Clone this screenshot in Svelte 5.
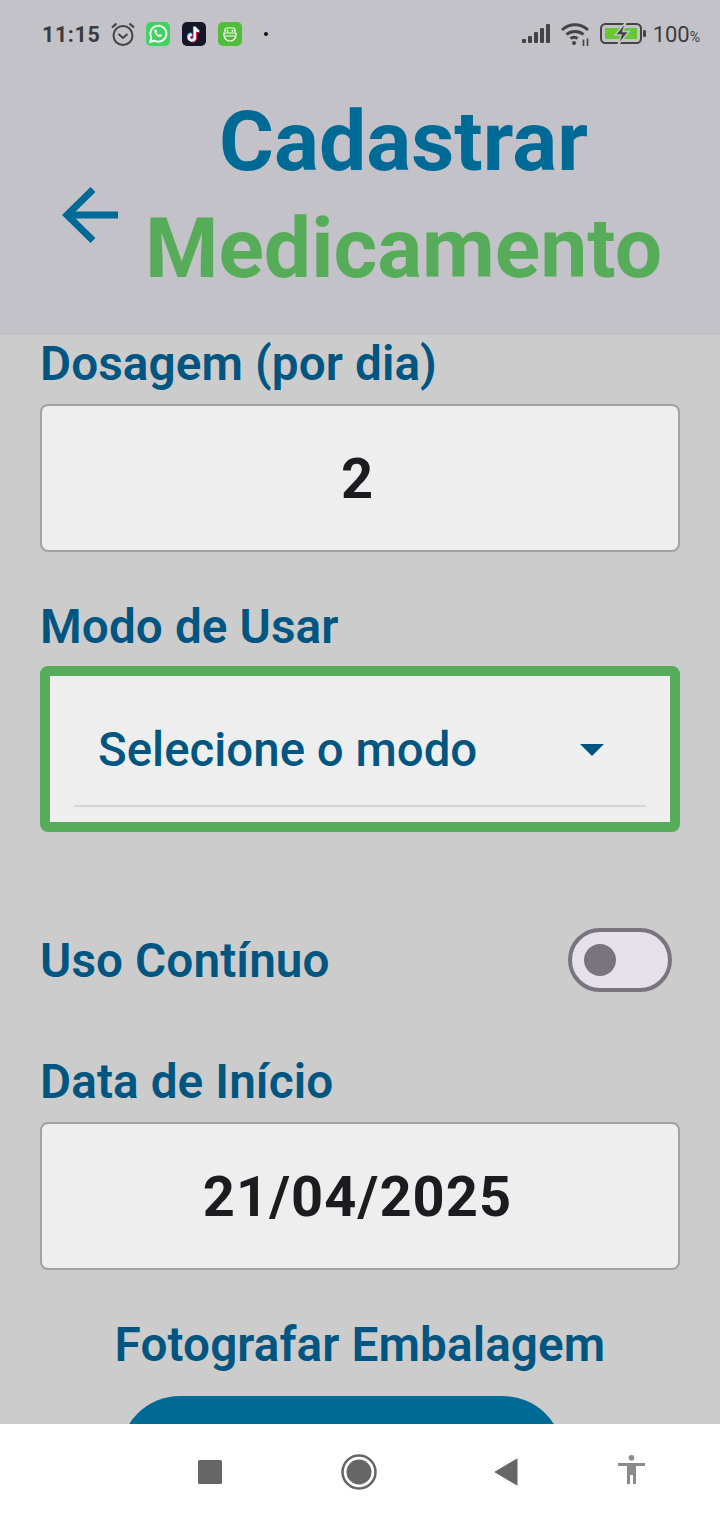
<script>
  let continuous = $state(false);
  const dosage = '2';
  const startDate = '21/04/2025';
</script>

<div class="screen">
  <header class="top">
    <div class="statusbar">
      <div class="status-left">
        <span class="time">11:15</span>
        <svg class="alarm" width="24" height="24" viewBox="0 0 24 24" fill="none" stroke="#444" stroke-width="2">
          <circle cx="12" cy="13.500" r="9.500"/>
          <path d="M7.500 12l4.500 4 4.500-4"/>
          <path d="M1 5.500l4.500-4M23 5.500l-4.500-4" stroke-width="2.200"/>
        </svg>
        <svg class="app" width="24" height="24" viewBox="0 0 24 24">
          <rect width="24" height="24" rx="5" fill="#3fd45f"/>
          <path d="M4.200 20l1.200-4.400a8 8 0 1 1 3 3z" fill="none" stroke="#fff" stroke-width="1.800"/>
          <path d="M9 7.500c-1 .8-1 2.400.4 4.400 1.400 2 3.200 3.200 4.800 3 1-.2 1.600-1 1.600-1.800l-2-1-.9.9c-1-.4-2-1.500-2.500-2.600l.8-.9-.9-2z" fill="#fff"/>
        </svg>
        <svg class="app" width="24" height="24" viewBox="0 0 24 24">
          <rect width="24" height="24" rx="5" fill="#14162a"/>
          <path d="M13 5v10.500a3 3 0 1 1-3-3M13 5c.3 2.300 1.800 3.800 4 4" fill="none" stroke="#f5235a" stroke-width="2.600" transform="translate(.8 .6)"/>
          <path d="M13 5v10.500a3 3 0 1 1-3-3M13 5c.3 2.300 1.800 3.800 4 4" fill="none" stroke="#35e5ea" stroke-width="2.600" transform="translate(-.8 -.6)"/>
          <path d="M13 5v10.500a3 3 0 1 1-3-3M13 5c.3 2.300 1.800 3.800 4 4" fill="none" stroke="#fff" stroke-width="2"/>
        </svg>
        <svg class="app" width="24" height="24" viewBox="0 0 24 24">
          <rect width="24" height="24" rx="5" fill="#52bd3a"/>
          <path d="M7 10V8a2 2 0 0 1 2-2h6a2 2 0 0 1 2 2v2M6 11h12v2a6 6 0 0 1-12 0z" fill="none" stroke="#fff" stroke-width="1.200"/>
          <circle cx="9.500" cy="8.800" r="1" fill="#fff"/>
          <circle cx="14.500" cy="8.800" r="1" fill="#fff"/>
          <path d="M7 14h10" fill="none" stroke="#fff" stroke-width="1"/>
        </svg>
        <span class="dot"></span>
      </div>
      <div class="status-right">
        <svg width="28" height="20" viewBox="0 0 28 20" fill="#444">
          <rect x="0" y="15" width="4" height="4" rx="1"/>
          <rect x="6" y="12" width="4" height="7" rx="1"/>
          <rect x="12" y="8" width="4" height="11" rx="1"/>
          <rect x="18" y="4" width="4" height="15" rx="1"/>
          <rect x="24" y="0" width="4" height="19" rx="1"/>
        </svg>
        <svg width="28" height="23" viewBox="0 0 28 23" fill="none" stroke="#444" stroke-width="3">
          <path d="M1 7c7-7 19-7 26 0"/>
          <path d="M5.500 11.500c4.500-4 12.500-4 17 0"/>
          <path d="M9.500 15.500c2-1.500 5-1.500 7 0"/>
          <circle cx="13" cy="20" r="2" fill="#444" stroke="none"/>
          <path d="M22.500 16.500V23M26.500 15.500V23" stroke-width="1.600"/>
        </svg>
        <svg width="46" height="24" viewBox="0 0 46 24">
          <rect x="1" y="2" width="40" height="19" rx="4.500" fill="none" stroke="#444" stroke-width="2"/>
          <rect x="5" y="6" width="32" height="11" rx="1" fill="#66c832"/>
          <path d="M26 0L15 13h6l-3 10 11-13.500h-6z" fill="#444" stroke="#c3c2c8" stroke-width="1.500"/>
          <rect x="43" y="8" width="3" height="7" rx="1.200" fill="#444"/>
        </svg>
        <span class="pct">100<small>%</small></span>
      </div>
    </div>

    <div class="titlebar">
      <button class="back" aria-label="Voltar">
        <svg width="56" height="56" viewBox="0 0 56 56" fill="none" stroke="#006a97" stroke-width="7">
          <path d="M56 28H5"/>
          <path d="M31 2.500L5 28l26 25.500"/>
        </svg>
      </button>
      <h1><span class="blue">Cadastrar</span> <span class="green">Medicamento</span></h1>
    </div>
  </header>

  <main class="form">
    <label class="label" for="dose">Dosagem (por dia)</label>
    <div class="field" id="dose">{dosage}</div>

    <div class="label mode-label">Modo de Usar</div>
    <div class="select-box">
      <div class="select">
        <span>Selecione o modo</span>
        <span class="caret"></span>
      </div>
    </div>

    <div class="switch-row">
      <span class="label row-label">Uso Contínuo</span>
      <button class="switch" class:on={continuous} aria-label="Uso Contínuo" onclick={() => (continuous = !continuous)}>
        <span class="knob"></span>
      </button>
    </div>

    <div class="label date-label">Data de Início</div>
    <div class="field">{startDate}</div>

    <div class="label photo-label">Fotografar Embalagem</div>
    <button class="photo-btn" aria-label="Fotografar Embalagem"></button>
  </main>

  <nav class="navbar">
    <svg width="24" height="24" viewBox="0 0 24 24"><rect width="24" height="24" rx="1.500" fill="#666"/></svg>
    <svg width="36" height="36" viewBox="0 0 36 36">
      <circle cx="18" cy="18" r="16.500" fill="none" stroke="#666" stroke-width="2.500"/>
      <circle cx="18" cy="18" r="12.500" fill="#666"/>
    </svg>
    <svg width="24" height="28" viewBox="0 0 24 28"><path d="M23 1v26L1 14z" fill="#666" stroke="#666" stroke-linejoin="round"/></svg>
    <svg class="a11y" width="27" height="29" viewBox="0 0 27 29" fill="#8a8a8a">
      <circle cx="13.500" cy="2.800" r="2.800"/>
      <path d="M0 8h27v3h-9v18h-3V20h-3v9H9V11H0z"/>
    </svg>
  </nav>
</div>

<style>
  :global(body) {
    margin: 0;
    font-family: Roboto, "Liberation Sans", sans-serif;
  }
  .screen {
    display: flex;
    flex-direction: column;
    width: 720px;
    height: 1520px;
    overflow: hidden;
    background: #cccccc;
  }
  .top {
    flex: 0 0 335px;
    background: #c3c2c8;
  }
  .statusbar {
    display: flex;
    justify-content: space-between;
    align-items: center;
    height: 68px;
    padding: 0 20px 0 42px;
    color: #444;
  }
  .status-left,
  .status-right {
    display: flex;
    align-items: center;
  }
  .time {
    width: 57px;
    font-size: 21.500px;
    font-weight: 700;
    letter-spacing: 0.6px;
    color: #3c3c3c;
    white-space: nowrap;
  }
  .alarm { margin-left: 12px; }
  .app { margin-left: 12px; }
  .alarm + .app { margin-left: 11px; }
  .dot {
    width: 4px;
    height: 4px;
    border-radius: 50%;
    background: #111;
    margin-left: 22px;
  }
  .status-right { gap: 11px; }
  .pct {
    margin-left: -4px;
    font-size: 22px;
    color: #3c3c3c;
  }
  .pct small { font-size: 14px; }
  .titlebar {
    display: flex;
    align-items: center;
    padding: 20px 0 0 62px;
  }
  .back {
    flex: none;
    display: flex;
    padding: 0;
    border: 0;
    background: none;
    margin: 40px 24px 0 0;
  }
  h1 {
    margin: 0;
    width: 523px;
    text-align: center;
    font-size: 84px;
    line-height: 107px;
    font-weight: 700;
  }
  .blue { color: #006a97; }
  .green { color: #57ac5a; }

  .form {
    flex: 1;
    min-height: 0;
    overflow: hidden;
    display: flex;
    flex-direction: column;
    padding: 4px 40px 0;
  }
  .form > * { flex: none; }
  .label {
    display: block;
    font-size: 47.700px;
    line-height: 50px;
    font-weight: 650;
    letter-spacing: 0.1px;
    color: #005680;
  }
  .field {
    box-sizing: border-box;
    height: 148px;
    margin-top: 15px;
    padding: 2px 5px 0 0;
    display: flex;
    align-items: center;
    justify-content: center;
    background: #eeeeee;
    border: 2px solid #a2a2a2;
    border-radius: 8px;
    font-size: 56px;
    font-weight: 700;
    letter-spacing: 1.100px;
    color: #1c1b1f;
  }
  .mode-label { margin-top: 50px; }
  .select-box {
    margin-top: 14px;
    padding: 0 24px;
    height: 146px;
    background: #eeeeee;
    border: 10px solid #57ac5a;
    border-radius: 8px;
  }
  .select {
    display: flex;
    align-items: center;
    justify-content: space-between;
    box-sizing: border-box;
    height: 131px;
    padding: 18px 42px 0 24px;
    border-bottom: 2px solid #d4d4d4;
    font-size: 47.400px;
    font-weight: 500;
    color: #005680;
  }
  .caret {
    width: 0;
    height: 0;
    border-left: 12px solid transparent;
    border-right: 12px solid transparent;
    border-top: 12px solid #005680;
  }
  .switch-row {
    display: flex;
    align-items: center;
    justify-content: space-between;
    margin-top: 96px;
    padding-right: 8px;
  }
  .row-label { padding-top: 2px; }
  .switch {
    width: 104px;
    height: 64px;
    padding: 0 0 0 12px;
    display: flex;
    align-items: center;
    box-sizing: border-box;
    background: #e6e0e9;
    border: 4px solid #79747e;
    border-radius: 32px;
  }
  .switch.on {
    justify-content: flex-end;
    padding: 0 12px 0 0;
    background: #57ac5a;
  }
  .knob {
    width: 32px;
    height: 32px;
    border-radius: 50%;
    background: #79747e;
  }
  .date-label { margin-top: 65px; }
  .photo-label {
    margin-top: 50px;
    text-align: center;
  }
  .photo-btn {
    align-self: flex-start;
    width: 443px;
    height: 120px;
    margin-top: 26px;
    margin-left: 80px;
    padding: 0;
    border: 0;
    border-radius: 60px;
    background: #006a97;
  }
  .navbar {
    flex: 0 0 96px;
    display: grid;
    grid-template-columns: 136px 162px 131px 121px;
    justify-content: start;
    justify-items: center;
    align-items: center;
    padding-left: 142px;
    background: #fff;
  }
  .a11y { margin-top: -5px; }
</style>
